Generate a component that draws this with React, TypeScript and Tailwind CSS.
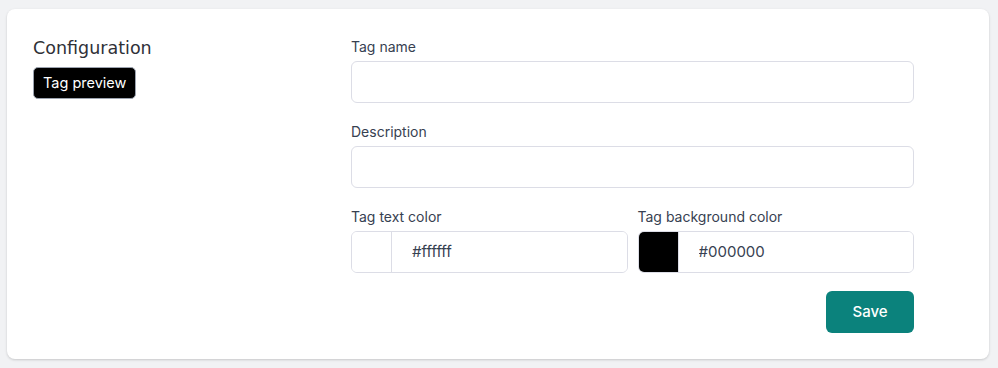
import React from "react";

const labelClass = "block text-sm leading-5 text-[#374151] mb-1";
const inputClass =
	"block w-full h-[42px] rounded-md border border-[#dcdde6] bg-white px-3 text-sm text-[#374151] outline-none";

function ColorField({ label, value, swatch }: { label: string; value: string; swatch: string }) {
	return (
		<div className="flex-1 min-w-0">
			<label className={labelClass}>{label}</label>
			<div className="flex h-[42px] rounded-md border border-[#dcdde6] bg-white overflow-hidden">
				<div className={`w-10 shrink-0 h-full border-r border-[#dcdde6] ${swatch}`}></div>
				<input
					type="text"
					defaultValue={value}
					className="flex-1 min-w-0 w-full pl-5 text-[15px] text-[#374151] outline-none bg-white"
				/>
			</div>
		</div>
	);
}

export default function App() {
	return (
		<div
			className="min-h-[368px] bg-[#f1f2f4] pt-[9px] pl-[7px] pr-[9px] pb-[10px]"
			style={{ fontFamily: "Inter, 'Liberation Sans', sans-serif" }}
		>
			<div className="bg-white rounded-lg shadow-[0_1px_3px_rgba(0,0,0,0.12),0_1px_2px_rgba(0,0,0,0.06)] pl-[26px] pt-[28px] pb-[26px] flex">
				{/* Left column */}
				<div className="w-[318px] shrink-0">
					<h2
						className="text-[17.5px] leading-6 text-[#2f3138] -mt-[1px]"
						style={{ fontFamily: "'DejaVu Sans', 'Noto Sans', sans-serif" }}
					>
						Configuration
					</h2>
					<span className="inline-block mt-[7px] rounded-[5px] bg-black border border-[#9ca3af] px-[9px] py-[5px] text-[14.5px] leading-5 text-white">
						Tag preview
					</span>
				</div>

				{/* Form */}
				<div className="w-[563px]">
					<div>
						<label className={labelClass}>Tag name</label>
						<input type="text" className={inputClass} />
					</div>
					<div className="mt-[19px]">
						<label className={labelClass}>Description</label>
						<input type="text" className={inputClass} />
					</div>
					<div className="mt-[19px] flex gap-[10px]">
						<ColorField label="Tag text color" value="#ffffff" swatch="bg-white" />
						<ColorField label="Tag background color" value="#000000" swatch="bg-black" />
					</div>
					<div className="mt-[18px] flex justify-end">
						<button className="h-[42px] w-[88px] rounded-md bg-[#0b827c] text-[15px] text-white font-medium">
							Save
						</button>
					</div>
				</div>
			</div>
		</div>
	);
}
